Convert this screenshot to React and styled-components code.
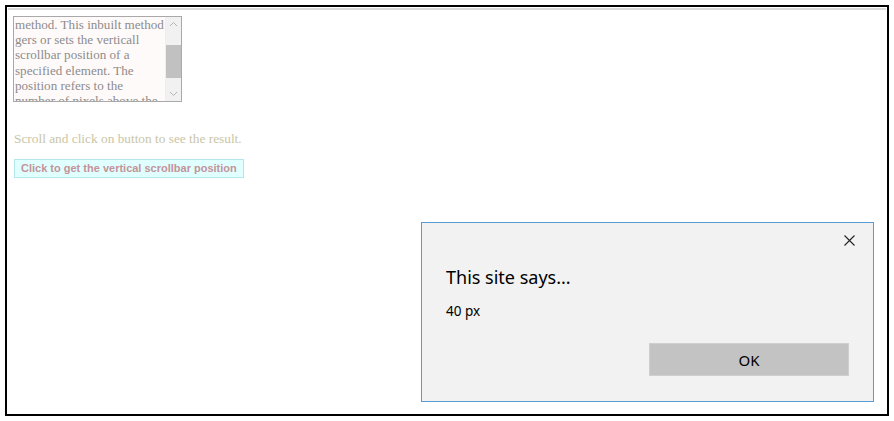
import styled, { createGlobalStyle } from "styled-components";

const GlobalStyle = createGlobalStyle`
  html, body {
    margin: 0;
    padding: 0;
    background: #ffffff;
  }
`;

const Frame = styled.div`
  position: relative;
  margin: 5px;
  width: 880px;
  height: 407px;
  border: 2px solid #000;
  background: #fff;
  font-family: "Liberation Serif", "Times New Roman", serif;
`;

const TopRule = styled.div`
  margin: 1px 1px 0;
  height: 2px;
  background: #d9d9d9;
`;

const Content = styled.div`
  padding: 6px 0 0 6px;
  display: flex;
  flex-direction: column;
  align-items: flex-start;
`;

const ScrollBox = styled.div`
  display: flex;
  width: 167px;
  height: 84px;
  border: 1px solid #a9a9a9;
  background: #fffafa;
`;

const TextView = styled.div`
  flex: 1;
  overflow: hidden;
  padding: 0 0 0 1px;
  font-size: 13.1px;
  line-height: 15.2px;
  color: #8c8c8c;
  white-space: nowrap;
`;

const ScrollBar = styled.div`
  width: 15px;
  display: flex;
  flex-direction: column;
  background: #f1f1f1;
  border-left: 1px solid #efefef;
`;

const ArrowBtn = styled.div`
  height: 14px;
  display: flex;
  align-items: center;
  justify-content: center;
`;

const Track = styled.div`
  flex: 1;
  display: flex;
  flex-direction: column;
`;

const Thumb = styled.div`
  margin-top: 14px;
  height: 33px;
  background: #c1c1c1;
`;

const Hint = styled.p`
  margin: 29px 0 0 1px;
  font-size: 13.33px;
  color: #c9c6a6;
`;

const ActionButton = styled.button`
  margin: 12px 0 0 1px;
  padding: 1px 6px 2px;
  background: #e0ffff;
  border: 1px solid #b4e6ee;
  color: #c4939a;
  font-family: "Liberation Sans", Arial, sans-serif;
  font-weight: bold;
  font-size: 11px;
  line-height: 14px;
`;

const Dialog = styled.div`
  position: absolute;
  left: 414px;
  top: 215px;
  width: 451px;
  height: 178px;
  border: 1px solid #5a9ad2;
  background: #f2f2f2;
  display: flex;
  flex-direction: column;
  font-family: "Noto Sans", "Open Sans", sans-serif;
  color: #000;
`;

const CloseRow = styled.div`
  display: flex;
  justify-content: flex-end;
  padding: 12px 18px 0 0;
  height: 11px;
`;

const Title = styled.div`
  margin: 19px 0 0 24px;
  font-size: 18px;
  line-height: 24px;
`;

const Message = styled.div`
  margin: 13px 0 0 24px;
  font-size: 13.5px;
  line-height: 18px;
`;

const Footer = styled.div`
  margin-top: auto;
  padding: 0 24px 25px 0;
  display: flex;
  justify-content: flex-end;
`;

const OkButton = styled.button`
  width: 200px;
  height: 33px;
  border: 1px solid #cfcfcf;
  background: #c3c3c3;
  font-family: "Noto Sans", "Open Sans", sans-serif;
  font-size: 15px;
  color: #000;
`;

const textLines = [
  "method. This inbuilt method",
  "gers or sets the verticall",
  "scrollbar position of a",
  "specified element. The",
  "position refers to the",
  "number of pixels above the",
];

function Chevron({ up }) {
  return (
    <svg width="9" height="6" viewBox="0 0 9 6">
      <path
        d={up ? "M1 5 L4.5 1.5 L8 5" : "M1 1 L4.5 4.5 L8 1"}
        fill="none"
        stroke="#b3b3b3"
        strokeWidth="1"
      />
    </svg>
  );
}

function App() {
  return (
    <>
      <GlobalStyle />
      <Frame>
        <TopRule />
        <Content>
          <ScrollBox>
            <TextView>
              {textLines.map((line) => (
                <div key={line}>{line}</div>
              ))}
            </TextView>
            <ScrollBar>
              <ArrowBtn>
                <Chevron up />
              </ArrowBtn>
              <Track>
                <Thumb />
              </Track>
              <ArrowBtn>
                <Chevron />
              </ArrowBtn>
            </ScrollBar>
          </ScrollBox>
          <Hint>Scroll and click on button to see the result.</Hint>
          <ActionButton>Click to get the vertical scrollbar position</ActionButton>
        </Content>
        <Dialog>
          <CloseRow>
            <svg width="11" height="11" viewBox="0 0 11 11">
              <path d="M0.5 0.5 L10.5 10.5 M10.5 0.5 L0.5 10.5" stroke="#222" strokeWidth="1.1" />
            </svg>
          </CloseRow>
          <Title>This site says...</Title>
          <Message>40 px</Message>
          <Footer>
            <OkButton>OK</OkButton>
          </Footer>
        </Dialog>
      </Frame>
    </>
  );
}

export default App;
